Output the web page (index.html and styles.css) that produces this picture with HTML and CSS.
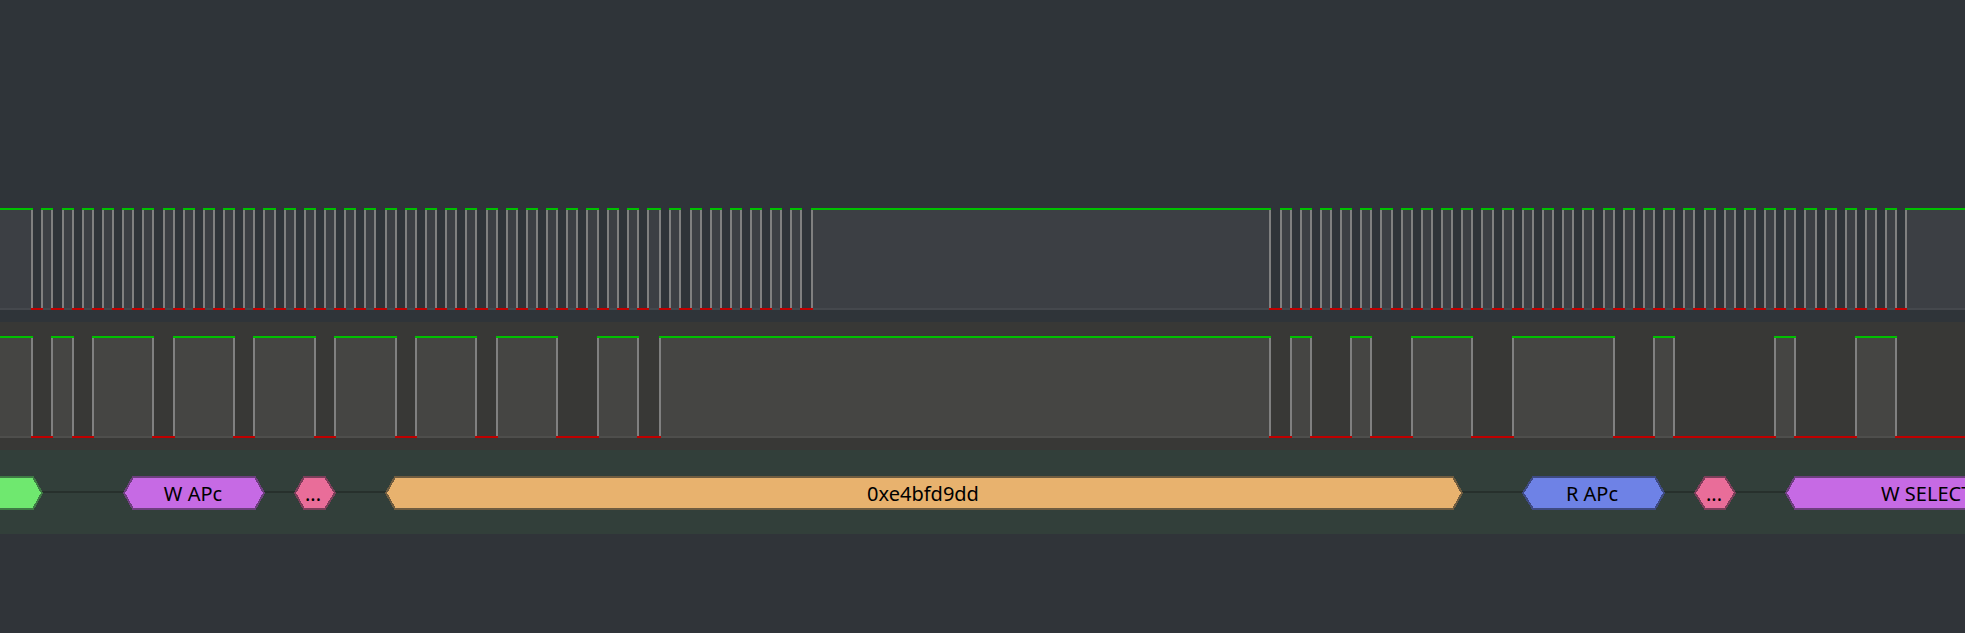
FILE: index.html
```html
<!DOCTYPE html>
<html lang="en">
<head>
    <meta charset="UTF-8">
    <meta name="viewport" content="width=device-width, initial-scale=1.0">
    <title>Logic Analyzer Traces</title>
    <link rel="stylesheet" href="styles.css">
</head>
<body>
    <section class="band band-clock">
        <svg class="trace" id="trace-clock" width="1965" height="102" viewBox="0 0 1965 102"></svg>
    </section>
    <section class="band band-data">
        <svg class="trace" id="trace-data" width="1965" height="102" viewBox="0 0 1965 102"></svg>
    </section>
    <section class="band band-decode">
        <svg class="decode" width="1965" height="34" viewBox="0 0 1965 34">
            <rect class="idle" x="0" y="15" width="1965" height="2"/>

            <polygon class="seg seg-green" points="-10,1 33,1 42,17 33,33 -10,33"/>

            <polygon class="seg seg-purple" points="124,17 133,1 255,1 264,17 255,33 133,33"/>
            <text class="seg-label" x="193" y="25">W APc</text>

            <polygon class="seg seg-pink" points="295,17 304,1 325,1 335,17 325,33 304,33"/>
            <text class="seg-label" x="313" y="25">...</text>

            <polygon class="seg seg-orange" points="386,17 395,1 1453,1 1462,17 1453,33 395,33"/>
            <text class="seg-label" x="923" y="25">0xe4bfd9dd</text>

            <polygon class="seg seg-blue" points="1523,17 1533,1 1655,1 1664,17 1655,33 1533,33"/>
            <text class="seg-label" x="1592" y="25">R APc</text>

            <polygon class="seg seg-pink" points="1695,17 1705,1 1725,1 1735,17 1725,33 1705,33"/>
            <text class="seg-label" x="1714" y="25">...</text>

            <polygon class="seg seg-purple" points="1786,17 1795,1 2100,1 2100,33 1795,33"/>
            <text class="seg-label seg-label-start" x="1881" y="25">W SELECT</text>
        </svg>
    </section>
    <script src="traces.js"></script>
</body>
</html>
```

FILE: styles.css
```css
html, body {
    margin: 0;
    padding: 0;
    height: 100%;
    overflow: hidden;
    background-color: #303439;
}

.band {
    box-sizing: border-box;
    width: 1965px;
}

.band svg {
    display: block;
}

.band-clock {
    height: 322px;
    padding-top: 208px;
    background-color: #2f3439;
}

.band-data {
    height: 128px;
    padding-top: 14px;
    background-color: #383836;
}

.band-decode {
    height: 84px;
    padding-top: 26px;
    background-color: #323f3a;
}

.trace rect {
    shape-rendering: crispEdges;
}

.trace .high {
    fill: #3c3f44;
}

.band-data .trace .high {
    fill: #454543;
}

.trace .floor {
    fill: #45484d;
}

.band-data .trace .floor {
    fill: #4e4e4c;
}

.trace .edge {
    fill: #808080;
}

.trace .top {
    fill: #00c000;
}

.trace .bottom {
    fill: #c00000;
}

.idle {
    fill: #27302c;
    shape-rendering: crispEdges;
}

.seg {
    stroke-width: 2;
    shape-rendering: crispEdges;
}

.seg-green {
    fill: #6fe86f;
    stroke: #3f7a45;
}

.seg-purple {
    fill: #c66ae4;
    stroke: #6d3f7e;
}

.seg-pink {
    fill: #e96d99;
    stroke: #7c3e5a;
}

.seg-orange {
    fill: #e8b26e;
    stroke: #6f5c40;
}

.seg-blue {
    fill: #6e82e6;
    stroke: #3e4a82;
}

.seg-label {
    font-family: "Noto Sans", sans-serif;
    font-size: 20px;
    fill: #000;
    text-anchor: middle;
}

.seg-label-start {
    text-anchor: start;
}
```

FILE: traces.js
```js
// signal starts high at x=0, every number is one transition
var clockEdges = [
    31, 41, 51, 62, 72, 82, 92, 102, 112, 122, 132, 142, 152, 163, 173, 183, 193, 203, 213,
    223, 233, 243, 253, 263, 274, 284, 294, 304, 314, 324, 334, 344, 354, 364, 374, 385, 395,
    405, 415, 425, 435, 445, 455, 465, 475, 486, 496, 506, 516, 526, 536, 546, 556, 566, 576,
    586, 597, 607, 617, 627, 637, 647, 659, 669, 679, 690, 700, 710, 720, 730, 740, 750, 760,
    770, 780, 790, 800, 811,
    1269, 1280, 1290, 1300, 1310, 1320, 1330, 1340, 1350, 1360, 1370, 1380, 1391, 1401, 1411,
    1421, 1431, 1441, 1451, 1461, 1471, 1481, 1492, 1502, 1512, 1522, 1532, 1542, 1552, 1562,
    1572, 1582, 1592, 1603, 1613, 1623, 1633, 1643, 1653, 1663, 1673, 1683, 1693, 1704, 1714,
    1724, 1734, 1744, 1754, 1764, 1774, 1784, 1794, 1804, 1815, 1825, 1835, 1845, 1855, 1865,
    1875, 1885, 1895, 1905
];

var dataEdges = [
    31, 51, 72, 92, 152, 173, 233, 253, 314, 334, 395, 415, 475, 496, 556, 597, 637, 659,
    1269, 1290, 1310, 1350, 1370, 1411, 1471, 1512, 1613, 1653, 1673, 1774, 1794, 1855, 1895
];

function addRect(svg, cls, x, y, w, h) {
    var rect = document.createElementNS('http://www.w3.org/2000/svg', 'rect');
    rect.setAttribute('class', cls);
    rect.setAttribute('x', x);
    rect.setAttribute('y', y);
    rect.setAttribute('width', w);
    rect.setAttribute('height', h);
    svg.appendChild(rect);
}

function drawTrace(id, edges) {
    var svg = document.getElementById(id);
    var points = [0].concat(edges, [1965]);

    // fills first so edges and rails sit on top
    for (var i = 0; i < points.length - 1; i += 2) {
        addRect(svg, 'high', points[i], 2, points[i + 1] - points[i], 98);
        addRect(svg, 'floor', points[i], 100, points[i + 1] - points[i], 2);
    }

    for (var j = 0; j < points.length - 1; j++) {
        var cls = j % 2 === 0 ? 'top' : 'bottom';
        var y = j % 2 === 0 ? 0 : 100;
        addRect(svg, cls, points[j], y, points[j + 1] - points[j] + 2, 2);
    }

    edges.forEach(function(x) {
        addRect(svg, 'edge', x, 2, 2, 98);
    });
}

drawTrace('trace-clock', clockEdges);
drawTrace('trace-data', dataEdges);
```
